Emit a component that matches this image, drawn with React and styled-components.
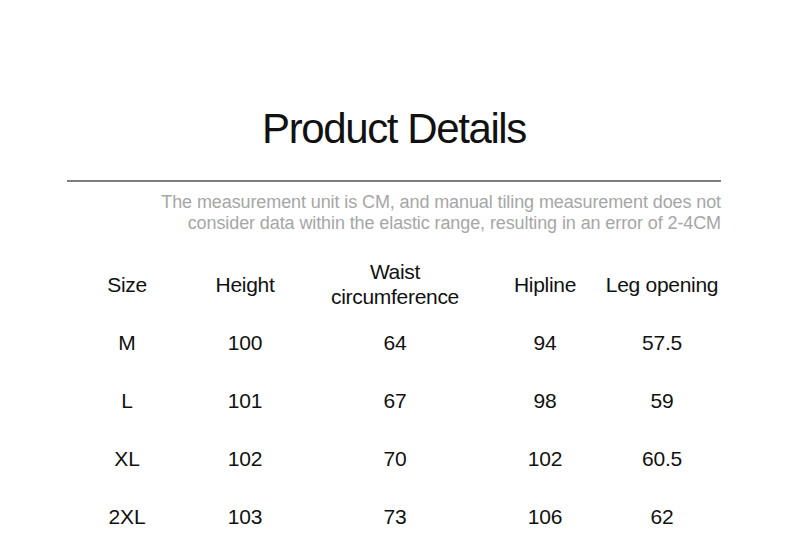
import React from "react";
import styled, { createGlobalStyle } from "styled-components";

const GlobalStyle = createGlobalStyle`
  body {
    margin: 0;
    background: #ffffff;
    font-family: "Liberation Sans", Arial, sans-serif;
    color: #111111;
  }
`;

const Page = styled.div`
  width: 790px;
  height: 545px;
  overflow: hidden;
  padding: 105px 69px 0 67px;
  box-sizing: border-box;
`;

const Title = styled.h1`
  margin: 0;
  font-size: 42px;
  line-height: 48px;
  font-weight: 400;
  letter-spacing: -1.4px;
  text-align: center;
  color: #111111;
`;

const Rule = styled.div`
  height: 2px;
  background: #7f7f7f;
  margin-top: 27px;
`;

const Note = styled.p`
  margin: 10px 0 0;
  font-size: 18px;
  line-height: 21px;
  letter-spacing: -0.1px;
  color: #a6a6a6;
  text-align: right;
`;

const Table = styled.div`
  display: grid;
  grid-template-columns: 120px 116px 184px 116px 118px;
  margin-top: 21px;
`;

const Cell = styled.div`
  height: 58px;
  display: flex;
  align-items: center;
  justify-content: center;
  text-align: center;
  font-size: 21px;
  line-height: 25px;
  letter-spacing: ${(p) => (p.$head ? "-0.3px" : "-0.2px")};
  color: #111111;
`;

const headers = ["Size", "Height", "Waist\ncircumference", "Hipline", "Leg opening"];
const rows = [
  ["M", "100", "64", "94", "57.5"],
  ["L", "101", "67", "98", "59"],
  ["XL", "102", "70", "102", "60.5"],
  ["2XL", "103", "73", "106", "62"],
];

export default function App() {
  return (
    <Page>
      <GlobalStyle />
      <Title>Product Details</Title>
      <Rule />
      <Note>
        The measurement unit is CM, and manual tiling measurement does not
        <br />
        consider data within the elastic range, resulting in an error of 2-4CM
      </Note>
      <Table>
        {headers.map((h) => (
          <Cell key={h} $head>
            <span>
              {h.split("\n").map((part, i) => (
                <React.Fragment key={i}>
                  {i > 0 && <br />}
                  {part}
                </React.Fragment>
              ))}
            </span>
          </Cell>
        ))}
        {rows.map((r) =>
          r.map((v, i) => <Cell key={r[0] + i}>{v}</Cell>)
        )}
      </Table>
    </Page>
  );
}
